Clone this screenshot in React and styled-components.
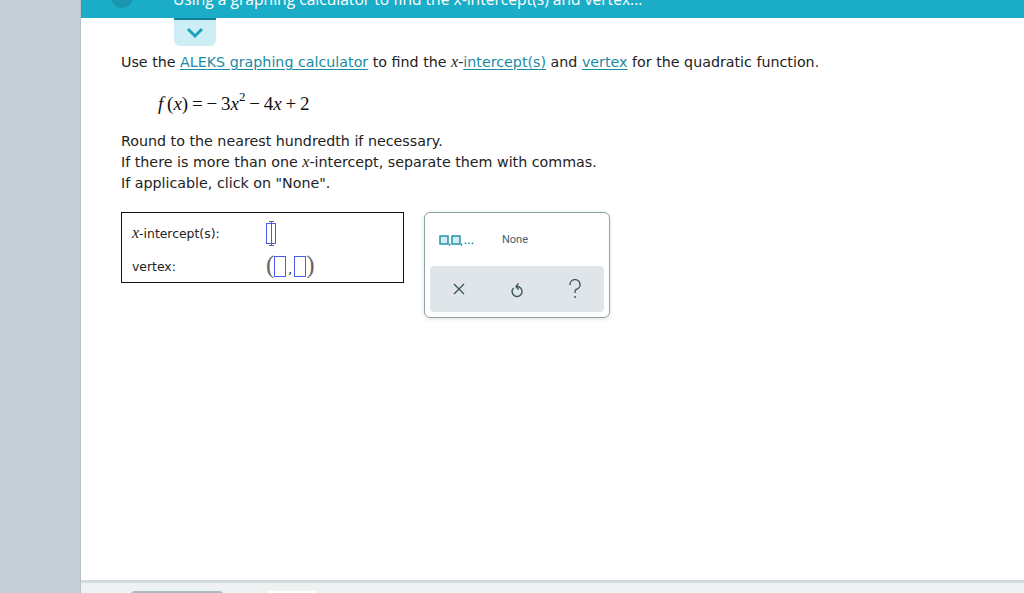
import styled, { createGlobalStyle } from "styled-components";

const Global = createGlobalStyle`
  html, body { margin: 0; padding: 0; }
  body {
    width: 1024px;
    height: 593px;
    overflow: hidden;
    font-family: "DejaVu Sans", Verdana, sans-serif;
    background: #fff;
  }
`;

const Page = styled.div`
  display: flex;
  width: 1024px;
  height: 593px;
`;

const Sidebar = styled.div`
  width: 80px;
  flex: none;
  background: #c3cfd5;
  border-right: 1px solid #b4c2c8;
`;

const Main = styled.div`
  flex: 1;
  display: flex;
  flex-direction: column;
  min-width: 0;
`;

const Header = styled.div`
  height: 18px;
  background: #1badc7;
  position: relative;
  overflow: hidden;
`;

const HeaderTitle = styled.div`
  position: absolute;
  left: 92px;
  top: -12px;
  color: #fff;
  font-family: "Open Sans", sans-serif;
  font-size: 15.6px;
  white-space: nowrap;
`;

const HeaderDot = styled.div`
  position: absolute;
  left: 30px;
  top: -14px;
  width: 22px;
  height: 22px;
  border-radius: 50%;
  background: #1796ad;
`;

const Content = styled.div`
  flex: 1;
  padding: 0 0 0 40px;
`;

const Toggle = styled.div`
  margin-left: 53px;
  width: 42px;
  height: 28px;
  background: #cdeef5;
  border-top: 2px solid #157f93;
  border-radius: 0 0 6px 6px;
  display: flex;
  align-items: center;
  justify-content: center;
  box-sizing: border-box;
`;

const Prompt = styled.p`
  margin: 6px 0 0;
  font-size: 14.25px;
  color: #222;
  line-height: 20px;
`;

const Link = styled.span`
  color: #1a8ba3;
  text-decoration: underline;
  text-underline-offset: 2px;
`;

const MathVar = styled.span`
  font-family: "Liberation Serif", "Times New Roman", serif;
  font-style: italic;
  font-size: 16px;
  line-height: 1;
`;

const Formula = styled.div`
  margin: 19px 0 0 37px;
  font-family: "Liberation Serif", "Times New Roman", serif;
  font-size: 19px;
  color: #111;
  line-height: 26px;
  sup {
    font-size: 13px;
    vertical-align: 9px;
    line-height: 0;
  }
`;

const Instructions = styled.div`
  margin-top: 14px;
  font-size: 14.25px;
  color: #222;
  line-height: 21px;
`;

const AnswerRow = styled.div`
  display: flex;
  align-items: flex-start;
  margin-top: 18px;
  gap: 20px;
`;

const AnswerBox = styled.div`
  width: 283px;
  height: 71px;
  box-sizing: border-box;
  border: 1px solid #111;
  display: grid;
  grid-template-columns: 134px 1fr;
  grid-template-rows: 40px 26px;
  padding: 0 0 0 10px;
  font-size: 12.4px;
  color: #222;
`;

const Label = styled.div`
  display: flex;
  align-items: center;
`;

const Field = styled.div`
  display: flex;
  align-items: center;
`;

const Slot = styled.span`
  display: inline-block;
  width: ${(p) => p.$w || 8}px;
  height: ${(p) => p.$h || 21}px;
  border: 1.5px solid #4a5cf0;
  box-sizing: border-box;
  position: relative;
`;

const Caret = styled.span`
  position: absolute;
  left: 50%;
  top: -3px;
  bottom: -3px;
  width: 1px;
  background: #666;
  &::before, &::after {
    content: "";
    position: absolute;
    left: -2px;
    width: 5px;
    height: 1px;
    background: #666;
  }
  &::before { top: 0; }
  &::after { bottom: 0; }
`;

const Paren = styled.span`
  font-family: "Liberation Serif", serif;
  font-size: 25px;
  color: #666;
  line-height: 1;
  margin-top: -3px;
`;

const Comma = styled.span`
  font-size: 12px;
  color: #222;
  align-self: flex-end;
  margin: 0 2px 2px;
`;

const Keypad = styled.div`
  width: 186px;
  height: 106px;
  box-sizing: border-box;
  border: 1px solid #8ea0a8;
  border-radius: 6px;
  box-shadow: 0 1px 4px rgba(0, 0, 0, 0.12);
  padding: 0 5px 5px;
  display: flex;
  flex-direction: column;
`;

const KeyRow = styled.div`
  height: 53px;
  display: flex;
  align-items: center;
  padding-left: 9px;
  gap: 19px;
`;

const KeyText = styled.span`
  font-family: "Roboto", sans-serif;
  font-size: 11px;
  color: #3f6070;
`;

const ActionBar = styled.div`
  flex: 1;
  background: #dfe5e8;
  border-radius: 4px;
  display: flex;
  align-items: center;
  justify-content: center;
  gap: 44px;
`;

const Footer = styled.div`
  height: 10px;
  border-top: 3px solid #d1dadd;
  background: #eef2f3;
  position: relative;
`;

const FooterBtn = styled.div`
  position: absolute;
  top: 8px;
  left: ${(p) => p.$left}px;
  width: ${(p) => p.$w}px;
  height: 10px;
  border-radius: 6px;
  background: ${(p) => p.$bg};
`;

const ListIcon = () => (
  <svg width="44" height="14" viewBox="0 0 44 14">
    <rect x="1" y="3" width="8" height="8" fill="#cdeef5" stroke="#1a8ba3" strokeWidth="1.4" />
    <path d="M11 10.5 l-0.8 2.2" stroke="#1a8ba3" strokeWidth="1.2" />
    <rect x="13" y="3" width="8" height="8" fill="#cdeef5" stroke="#1a8ba3" strokeWidth="1.4" />
    <path d="M23 10.5 l-0.8 2.2" stroke="#1a8ba3" strokeWidth="1.2" />
    <circle cx="26.5" cy="10.3" r="0.9" fill="#1a8ba3" />
    <circle cx="30" cy="10.3" r="0.9" fill="#1a8ba3" />
    <circle cx="33.5" cy="10.3" r="0.9" fill="#1a8ba3" />
  </svg>
);

export default function App() {
  return (
    <>
      <Global />
      <Page>
        <Sidebar />
        <Main>
          <Header>
            <HeaderDot />
            <HeaderTitle>Using a graphing calculator to find the x-intercept(s) and vertex...</HeaderTitle>
          </Header>
          <Content>
            <Toggle>
              <svg width="18" height="12" viewBox="0 0 18 12">
                <path d="M2 2 L9 9 L16 2" fill="none" stroke="#1ba3bd" strokeWidth="3" />
              </svg>
            </Toggle>
            <Prompt>
              Use the <Link>ALEKS graphing calculator</Link> to find the <MathVar>x</MathVar>-
              <Link>intercept(s)</Link> and <Link>vertex</Link> for the quadratic function.
            </Prompt>
            <Formula>
              <i>f</i>&thinsp;(<i>x</i>)&thinsp;=&thinsp;&minus;&thinsp;3<i>x</i>
              <sup>2</sup>&thinsp;&minus;&thinsp;4<i>x</i>&thinsp;+&thinsp;2
            </Formula>
            <Instructions>
              Round to the nearest hundredth if necessary.
              <br />
              If there is more than one <MathVar>x</MathVar>-intercept, separate them with commas.
              <br />
              If applicable, click on "None".
            </Instructions>
            <AnswerRow>
              <AnswerBox>
                <Label>
                  <MathVar>x</MathVar>-intercept(s):
                </Label>
                <Field>
                  <Slot $w={10} $h={21}>
                    <Caret />
                  </Slot>
                </Field>
                <Label>vertex:</Label>
                <Field>
                  <Paren>(</Paren>
                  <Slot $w={12} $h={21} />
                  <Comma>,</Comma>
                  <Slot $w={12} $h={21} />
                  <Paren>)</Paren>
                </Field>
              </AnswerBox>
              <Keypad>
                <KeyRow>
                  <ListIcon />
                  <KeyText>None</KeyText>
                </KeyRow>
                <ActionBar>
                  <svg width="14" height="14" viewBox="0 0 14 14">
                    <path d="M2 2 L12 12 M12 2 L2 12" stroke="#3d5663" strokeWidth="1.4" />
                  </svg>
                  <svg width="14" height="17" viewBox="0 0 14 17">
                    <path
                      d="M3.5 7 A5 5 0 1 0 7 5.5"
                      fill="none"
                      stroke="#3d5663"
                      strokeWidth="1.4"
                    />
                    <path d="M8.5 2.5 L6 5.5 L8.5 8.5" fill="none" stroke="#3d5663" strokeWidth="1.4" />
                  </svg>
                  <svg width="14" height="20" viewBox="0 0 14 20">
                    <path
                      d="M2 6 A5 5 0 1 1 8 10.5 C7 11 7 12 7 14"
                      fill="none"
                      stroke="#3d5663"
                      strokeWidth="1.4"
                    />
                    <circle cx="7" cy="18" r="1" fill="#3d5663" />
                  </svg>
                </ActionBar>
              </Keypad>
            </AnswerRow>
          </Content>
          <Footer>
            <FooterBtn $left={49} $w={94} $bg="#a9bcc3" />
            <FooterBtn $left={185} $w={52} $bg="#ffffff" />
          </Footer>
        </Main>
      </Page>
    </>
  );
}
